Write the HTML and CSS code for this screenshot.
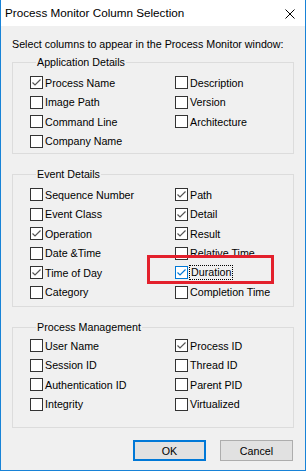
FILE: index.html
```html
<!DOCTYPE html>
<html lang="en">
<head>
    <meta charset="UTF-8">
    <title>Process Monitor Column Selection</title>
    <link rel="stylesheet" href="styles.css">
</head>
<body>
    <div class="window">
        <div class="titlebar">
            <span class="title">Process Monitor Column Selection</span>
            <svg class="close" width="10" height="10" viewBox="0 0 10 10">
                <path d="M0.5 0.5 L9.5 9.5 M9.5 0.5 L0.5 9.5" stroke="#000" stroke-width="1" fill="none"/>
            </svg>
        </div>

        <div class="content">
            <p class="intro">Select columns to appear in the Process Monitor window:</p>

            <fieldset class="group group-app">
                <legend>Application Details</legend>
                <div class="grid">
                    <label class="opt"><span class="box on"><svg viewBox="0 0 11 11"><path d="M1.5 5.5 L4 8 L9.5 2.5"/></svg></span>Process Name</label>
                    <label class="opt"><span class="box"></span>Description</label>
                    <label class="opt"><span class="box"></span>Image Path</label>
                    <label class="opt"><span class="box"></span>Version</label>
                    <label class="opt"><span class="box"></span>Command Line</label>
                    <label class="opt"><span class="box"></span>Architecture</label>
                    <label class="opt"><span class="box"></span>Company Name</label>
                </div>
            </fieldset>

            <fieldset class="group group-event">
                <legend>Event Details</legend>
                <div class="grid">
                    <label class="opt"><span class="box"></span>Sequence Number</label>
                    <label class="opt"><span class="box on"><svg viewBox="0 0 11 11"><path d="M1.5 5.5 L4 8 L9.5 2.5"/></svg></span>Path</label>
                    <label class="opt"><span class="box"></span>Event Class</label>
                    <label class="opt"><span class="box on"><svg viewBox="0 0 11 11"><path d="M1.5 5.5 L4 8 L9.5 2.5"/></svg></span>Detail</label>
                    <label class="opt"><span class="box on"><svg viewBox="0 0 11 11"><path d="M1.5 5.5 L4 8 L9.5 2.5"/></svg></span>Operation</label>
                    <label class="opt"><span class="box on"><svg viewBox="0 0 11 11"><path d="M1.5 5.5 L4 8 L9.5 2.5"/></svg></span>Result</label>
                    <label class="opt"><span class="box"></span>Date &amp;Time</label>
                    <label class="opt"><span class="box"></span>Relative Time</label>
                    <label class="opt"><span class="box on"><svg viewBox="0 0 11 11"><path d="M1.5 5.5 L4 8 L9.5 2.5"/></svg></span>Time of Day</label>
                    <label class="opt"><span class="box on hot"><svg viewBox="0 0 11 11"><path d="M1.5 5.5 L4 8 L9.5 2.5"/></svg></span><span class="focus">Duration</span></label>
                    <label class="opt"><span class="box"></span>Category</label>
                    <label class="opt"><span class="box"></span>Completion Time</label>
                </div>
            </fieldset>

            <fieldset class="group group-proc">
                <legend>Process Management</legend>
                <div class="grid">
                    <label class="opt"><span class="box"></span>User Name</label>
                    <label class="opt"><span class="box on"><svg viewBox="0 0 11 11"><path d="M1.5 5.5 L4 8 L9.5 2.5"/></svg></span>Process ID</label>
                    <label class="opt"><span class="box"></span>Session ID</label>
                    <label class="opt"><span class="box"></span>Thread ID</label>
                    <label class="opt"><span class="box"></span>Authentication ID</label>
                    <label class="opt"><span class="box"></span>Parent PID</label>
                    <label class="opt"><span class="box"></span>Integrity</label>
                    <label class="opt"><span class="box"></span>Virtualized</label>
                </div>
            </fieldset>

            <div class="buttons">
                <button class="btn default">OK</button>
                <button class="btn">Cancel</button>
            </div>
        </div>

        <!-- red highlight drawn over the Duration option -->
        <div class="marker"></div>
    </div>
</body>
</html>
```

FILE: styles.css
```css
* {
    box-sizing: border-box;
}
body {
    margin: 0;
    font-family: "Liberation Sans", Arial, sans-serif;
    font-size: 10.7px;
    color: #000;
    background: #fff;
}
.window {
    position: relative;
    width: 306px;
    height: 471px;
    background: #f0f0f0;
    border: 1px solid #1883d7;
    border-top: none;
    display: flex;
    flex-direction: column;
}
.titlebar {
    height: 26px;
    background: #fff;
    display: flex;
    align-items: center;
    justify-content: space-between;
    padding: 0 10px 0 4px;
    flex-shrink: 0;
}
.title {
    font-size: 11.7px;
    margin-top: -1px;
}
.close {
    margin-top: 1px;
}
.content {
    padding: 11px 11px 0 11px;
}
.intro {
    margin: 0;
    line-height: 14px;
}
.group {
    margin: 4px 0 0 0;
    padding: 4px 0 0 17px;
    border: 1px solid #dcdcdc;
    min-width: 0;
}
.group + .group {
    margin-top: 13px;
}
.group legend {
    padding: 0 1px;
    margin-left: 6px;
    line-height: 14px;
}
.group-app {
    padding-bottom: 2px;
}
.group-event {
    padding-bottom: 4px;
}
.group-proc {
    padding-top: 2px;
    padding-bottom: 13px;
}
.grid {
    display: grid;
    grid-template-columns: 145px 1fr;
    grid-auto-rows: 19.5px;
}
.opt {
    display: flex;
    align-items: center;
    gap: 2px;
    white-space: nowrap;
}
.box {
    width: 13px;
    height: 13px;
    border: 1px solid #333;
    background: #fff;
    flex-shrink: 0;
    display: flex;
}
.box svg {
    width: 11px;
    height: 11px;
    fill: none;
    stroke: #555;
    stroke-width: 1.2;
}
.box.hot {
    border-color: #0078d7;
}
.box.hot svg {
    stroke: #0078d7;
}
.focus {
    outline: 1px dotted #000;
    outline-offset: 0;
    padding: 0 1px;
    line-height: 13px;
}
.marker {
    position: absolute;
    left: 146px;
    top: 255px;
    width: 127px;
    height: 29px;
    border: 3px solid #e3202c;
}
.buttons {
    display: flex;
    justify-content: flex-end;
    gap: 14px;
    margin-top: 12px;
    padding-right: 1px;
}
.btn {
    width: 73px;
    height: 21px;
    font: inherit;
    background: #e1e1e1;
    border: 1px solid #adadad;
    padding: 0;
}
.btn.default {
    border: 2px solid #0078d7;
}
```
